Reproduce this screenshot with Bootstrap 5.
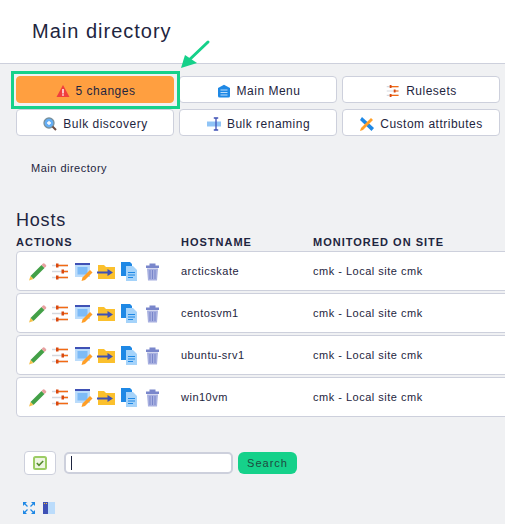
<!DOCTYPE html>
<html lang="en">
<head>
  <meta charset="UTF-8">
  <title>Main directory</title>
  <meta name="viewport" content="width=device-width, initial-scale=1">
  <link href="https://cdn.jsdelivr.net/npm/bootstrap@5.3.0/dist/css/bootstrap.min.css" rel="stylesheet">
  <style>
    html, body { height: 524px; overflow: hidden; }
    body { background: #f0f1f3; color: #1e2540; font-family: "Liberation Sans", Arial, sans-serif; font-size: 12px; letter-spacing: .4px; }
    .page-head { height: 64px; background: #fff; border-bottom: 1px solid #cdd0dc; padding: 18px 32px 0; }
    .page-head h1 { font-size: 20px; font-weight: 400; letter-spacing: 1px; line-height: 26px; margin: 0; color: #1e2540; }
    .menu-wrap { position: relative; padding: 12px 5px 0 16px; }
    .menu-grid { display: grid; grid-template-columns: repeat(3, 158px); column-gap: 5px; row-gap: 6px; }
    .menu-btn { height: 27px; background: #fff; border: 1px solid #cdd0dc; border-radius: 4px; color: #1e2540; font-size: 12px; letter-spacing: .5px; padding: 2px 0 0 1px; gap: 6px; }
    .menu-btn svg { width: 14px; height: 14px; flex: none; }
    .menu-btn.is-warn { background: #ff9f40; border-color: #ff9f40; }
    .tip-box { position: absolute; left: 11px; top: 7px; width: 169px; height: 38px; border: 3px solid #15d18a; pointer-events: none; }
    .tip-arrow { position: absolute; left: 167px; top: -38px; width: 34px; height: 34px; }
    .crumb { padding: 25px 0 0 31px; font-size: 11px; letter-spacing: .5px; line-height: 14px; }
    .hosts-title { font-size: 18px; font-weight: 400; letter-spacing: .8px; line-height: 22px; margin: 34px 0 0 16px; }
    .host-cols { display: grid; grid-template-columns: 165px 132px 1fr; }
    .host-head { margin: 4px 0 2px 16px; font-size: 11px; font-weight: 700; letter-spacing: 1px; line-height: 14px; }
    .host-row { height: 40px; margin: 0 -4px 2px 16px; background: #fff; border: 1px solid #cdd0dc; border-radius: 4px; align-items: center; grid-template-columns: 164px 132px 1fr; font-size: 11px; letter-spacing: .5px; }
    .host-icons { padding-left: 11px; gap: 4px; align-items: center; }
    .host-icons svg { width: 19px; height: 19px; flex: none; }
    .search-bar { margin: 34px 0 0 24px; }
    .check-btn { width: 32px; height: 24px; background: #fff; border: 1px solid #cdd0dc; border-radius: 4px; padding: 0; }
    .search-input { width: 169px; height: 22px; margin-left: 8px; background: #fff; border: 2px solid #cdd0dc; border-radius: 5px; padding: 0 5px; }
    .search-input i { display: block; width: 1px; height: 14px; background: #1e2540; }
    .search-btn { width: 59px; height: 22px; margin-left: 5px; padding: 0; background: #15d18a; border: 0; border-radius: 6px; color: #1e4a40; font-size: 11px; letter-spacing: 1px; }
    .foot-icons { margin: 27px 0 0 23px; gap: 8px; }
    .foot-icons svg { width: 12px; height: 12px; }
  </style>
</head>
<body>
  <svg width="0" height="0" class="position-absolute">
    <defs>
      <symbol id="ic-pencil" viewBox="0 0 19 19">
        <path d="M2.500 14 13.500 3l3 3L5.500 17z" fill="#43a047"/>
        <path d="M13.500 3l1.500-1.500a1 1 0 0 1 1.400 0l1.600 1.600a1 1 0 0 1 0 1.400L16.500 6z" fill="#e8a0a0"/>
        <path d="M2.500 14l3 3-4.500 1.500z" fill="#f5c04a"/>
      </symbol>
      <symbol id="ic-rules" viewBox="0 0 19 19">
        <path d="M1 3.500h16M1 9.500h16M1 15.500h16" stroke="#d5d8de" stroke-width="1.600"/>
        <path d="M6 3.500h11M12 9.500h5M6 15.500h11" stroke="#f26a13" stroke-width="1.600"/>
        <path d="M5 1.500h2.500v4H5zM10.500 7.500H13v4h-2.500zM5 13.500h2.500v4H5z" fill="#d9480f"/>
      </symbol>
      <symbol id="ic-edit" viewBox="0 0 19 19">
        <path d="M1 1h15v14H1z" fill="#bbdcfb"/>
        <path d="M1 1h15v2H1z" fill="#3f51b5"/>
        <path d="M3.500 5h10v7.500h-10z" fill="#7dbbf7"/>
        <path d="M8.500 15.500l7.500-7.500 2.500 2.500-7.500 7.500-3.500 1z" fill="#ff9f28"/>
      </symbol>
      <symbol id="ic-move" viewBox="0 0 19 19">
        <path d="M1 3h6l2 2h9v12H1z" fill="#fbc02d"/>
        <path d="M0 9.500h10.500V7l5.500 3.500-5.500 3.500v-2.500H0z" fill="#3f51b5"/>
      </symbol>
      <symbol id="ic-clone" viewBox="0 0 19 19">
        <path d="M1 0h9l2 2v12H1z" fill="#1e88e5"/>
        <path d="M6 4h7l4 4v11H6z" fill="#a5d3fa"/>
        <path d="M8 10.500h7M8 13h7M8 15.500h5" stroke="#1e88e5"/>
      </symbol>
      <symbol id="ic-trash" viewBox="0 0 19 19">
        <path d="M3 3.500h13V6H3zM6.500 1.500h6v2h-6z" fill="#7986cb"/>
        <path d="M4 6.500h11l-1 12H5z" fill="#a8b0e0"/>
        <path d="M7 8v9M9.500 8v9M12 8v9" stroke="#7986cb"/>
      </symbol>
    </defs>
  </svg>

  <div class="page-head"><h1>Main directory</h1></div>

  <div class="menu-wrap">
    <div class="menu-grid">
      <button class="btn menu-btn is-warn d-flex align-items-center justify-content-center">
        <svg viewBox="0 0 14 14"><path d="M7 1 13.500 13H.5z" fill="#f03e3e"/><path d="M6.300 5h1.400v4.500H6.300zM6.300 10.300h1.400v1.400H6.300z" fill="#fff"/></svg>5 changes</button>
      <button class="btn menu-btn d-flex align-items-center justify-content-center">
        <svg viewBox="0 0 14 14"><path d="M7 .8 13 4v8a1.500 1.500 0 0 1-1.500 1.500h-9A1.500 1.500 0 0 1 1 12V4z" fill="#1e88e5"/><path d="M3.500 6h7M3.500 8.500h7M3.500 11h7" stroke="#bbdcfb"/></svg>Main Menu</button>
      <button class="btn menu-btn d-flex align-items-center justify-content-center">
        <svg viewBox="0 0 19 19"><use href="#ic-rules"/></svg>Rulesets</button>
      <button class="btn menu-btn d-flex align-items-center justify-content-center">
        <svg viewBox="0 0 14 14"><circle cx="6" cy="6" r="5" fill="#64aef5" stroke="#78909c" stroke-width="1.300"/><path d="M4 6h4M6 4v4" stroke="#fff" stroke-width="1.300"/><path d="M9.500 9.500 13 13" stroke="#6d4c41" stroke-width="2"/></svg>Bulk discovery</button>
      <button class="btn menu-btn d-flex align-items-center justify-content-center">
        <svg viewBox="0 0 14 14"><path d="M0 4.500h14v5H0z" fill="#90c4f6"/><path d="M9 1v12M6.800 1h4.400M6.800 13h4.400" stroke="#3f51b5" stroke-width="1.300" fill="none"/></svg>Bulk renaming</button>
      <button class="btn menu-btn d-flex align-items-center justify-content-center">
        <svg viewBox="0 0 14 14"><path d="M2 0 14 11l-2.500 3L0 3z" fill="#1e88e5"/><path d="M11 1l2 2L3 13l-3 1 1-3z" fill="#ff9f28"/></svg>Custom attributes</button>
    </div>
    <div class="tip-box">
      <svg class="tip-arrow" viewBox="0 0 34 34"><path d="M27 6 6 26" stroke="#15d18a" stroke-width="3" stroke-linecap="round"/><path d="M0 32 4 19l12 8z" fill="#15d18a"/></svg>
    </div>
  </div>

  <div class="crumb">Main directory</div>

  <h2 class="hosts-title">Hosts</h2>
  <div class="host-cols host-head"><span>ACTIONS</span><span>HOSTNAME</span><span>MONITORED ON SITE</span></div>

  <div id="hostRows"></div>

  <div class="search-bar d-flex align-items-center">
    <button class="btn check-btn d-flex align-items-center justify-content-center">
      <svg width="14" height="14" viewBox="0 0 14 14"><rect x="1" y="1" width="12" height="12" rx="1.500" fill="#eef5e2" stroke="#9ccc65" stroke-width="2"/><path d="M3.800 7 6 9.300l4.200-4.300" fill="none" stroke="#558b2f" stroke-width="1.600"/></svg>
    </button>
    <div class="search-input d-flex align-items-center"><i></i></div>
    <button class="btn search-btn">Search</button>
  </div>

  <div class="foot-icons d-flex">
    <svg viewBox="0 0 12 12"><path d="M0 0h4L0 4zM12 0H8l4 4zM0 12h4L0 8zM12 12H8l4-4z" fill="#1e88e5"/><path d="M1 1l3.500 3.500M11 1 7.500 4.500M1 11l3.500-3.500M11 11 7.500 7.500" stroke="#1e88e5" stroke-width="1.200"/></svg>
    <svg viewBox="0 0 12 12"><path d="M5 0h7v12H5z" fill="#bbdcfb"/><path d="M0 0h5v12H0z" fill="#3f51b5"/><path d="M1 1h1v1H1zM3 1h1v1H3z" fill="#fbc02d"/></svg>
  </div>

  <script>
    const hosts = ["arcticskate", "centosvm1", "ubuntu-srv1", "win10vm"];
    const icons = ["pencil", "rules", "edit", "move", "clone", "trash"];
    const iconHtml = icons.map(i => `<svg><use href="#ic-${i}"/></svg>`).join("");
    document.getElementById("hostRows").innerHTML = hosts.map(h => `
      <div class="host-cols host-row">
        <div class="d-flex host-icons">${iconHtml}</div>
        <span>${h}</span>
        <span>cmk - Local site cmk</span>
      </div>`).join("");
  </script>
  <script src="https://cdn.jsdelivr.net/npm/bootstrap@5.3.0/dist/js/bootstrap.bundle.min.js"></script>
</body>
</html>
